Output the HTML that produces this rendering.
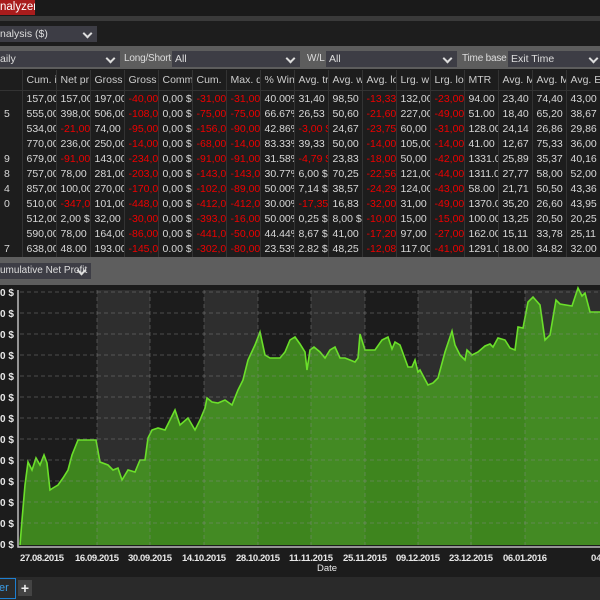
<!DOCTYPE html><html><head><style>
body{margin:0;width:600px;height:600px;overflow:hidden;background:#1d1d1d;font-family:"Liberation Sans",sans-serif;font-size:10.5px;color:#d8d8d8;position:relative}
.a{position:absolute;white-space:nowrap}
.dd{position:absolute;background:#3d3d45;color:#ddd;height:16px;line-height:16px;padding-left:3px;box-sizing:border-box;white-space:nowrap;overflow:hidden}
.dd:after{content:"";position:absolute;right:6px;top:4px;width:5px;height:5px;border-right:2px solid #ddd;border-bottom:2px solid #ddd;transform:rotate(45deg)}
table{position:absolute;left:0;top:70px;border-collapse:collapse;table-layout:fixed;width:600px}
td{height:15.1px;padding:0 0 0 4px;white-space:nowrap;overflow:hidden;border-right:1px solid #333;font-size:10.5px;color:#d8d8d8;text-overflow:clip}
tr.h td{height:20px;border-bottom:1px solid #333;color:#ccc}
.r{color:#e00}
</style></head><body>
<div class="a" style="left:0;top:0;width:600px;height:17px;background:#1a1a1a"></div>
<div class="a" style="left:0;top:0;width:35px;height:15px;background:#a81c1c;color:#fff;font-size:11.5px;line-height:15px;overflow:hidden">nalyzer</div>
<div class="a" style="left:0;top:16px;width:600px;height:5px;background:#3a3a3a"></div>
<div class="dd" style="left:-3px;top:26px;width:100px">nalysis ($)</div>
<div class="a" style="left:0;top:46px;width:600px;height:23px;background:#5d5d5d"></div>
<div class="dd" style="left:-3px;top:51px;width:123px">aily</div>
<div class="a" style="left:124px;top:51px;line-height:16px;color:#ddd;font-size:10px;letter-spacing:-0.2px">Long/Short</div>
<div class="dd" style="left:172px;top:51px;width:128px">All</div>
<div class="a" style="left:307px;top:51px;line-height:16px;color:#ddd;font-size:10px">W/L</div>
<div class="dd" style="left:326px;top:51px;width:131px">All</div>
<div class="a" style="left:462px;top:51px;line-height:16px;color:#ddd;font-size:10px;letter-spacing:-0.2px">Time base</div>
<div class="dd" style="left:508px;top:51px;width:95px">Exit Time</div>
<table>
<colgroup><col style="width:22px"><col span="17" style="width:34px"></colgroup>
<tr class="h"><td></td><td>Cum. i</td><td>Net pr</td><td>Gross</td><td>Gross</td><td>Comm</td><td>Cum.</td><td>Max. d</td><td>% Win</td><td>Avg. tr</td><td>Avg. w</td><td>Avg. lo</td><td>Lrg. w</td><td>Lrg. lo</td><td>MTR</td><td>Avg. M</td><td>Avg. M</td><td>Avg. E</td></tr>
<tr><td></td><td>157,00</td><td>157,00</td><td>197,00</td><td class="r">-40,00</td><td>0,00 $</td><td class="r">-31,00</td><td class="r">-31,00</td><td>40.00%</td><td>31,40</td><td>98,50</td><td class="r">-13,33</td><td>132,00</td><td class="r">-23,00</td><td>94.00</td><td>23,40</td><td>74,40</td><td>43,00</td></tr>
<tr><td>5</td><td>555,00</td><td>398,00</td><td>506,00</td><td class="r">-108,0</td><td>0,00 $</td><td class="r">-75,00</td><td class="r">-75,00</td><td>66.67%</td><td>26,53</td><td>50,60</td><td class="r">-21,60</td><td>227,00</td><td class="r">-49,00</td><td>51.00</td><td>18,40</td><td>65,20</td><td>38,67</td></tr>
<tr><td></td><td>534,00</td><td class="r">-21,00</td><td>74,00</td><td class="r">-95,00</td><td>0,00 $</td><td class="r">-156,0</td><td class="r">-90,00</td><td>42.86%</td><td class="r">-3,00 $</td><td>24,67</td><td class="r">-23,75</td><td>60,00</td><td class="r">-31,00</td><td>128.00</td><td>24,14</td><td>26,86</td><td>29,86</td></tr>
<tr><td></td><td>770,00</td><td>236,00</td><td>250,00</td><td class="r">-14,00</td><td>0,00 $</td><td class="r">-68,00</td><td class="r">-14,00</td><td>83.33%</td><td>39,33</td><td>50,00</td><td class="r">-14,00</td><td>105,00</td><td class="r">-14,00</td><td>41.00</td><td>12,67</td><td>75,33</td><td>36,00</td></tr>
<tr><td>9</td><td>679,00</td><td class="r">-91,00</td><td>143,00</td><td class="r">-234,0</td><td>0,00 $</td><td class="r">-91,00</td><td class="r">-91,00</td><td>31.58%</td><td class="r">-4,79 $</td><td>23,83</td><td class="r">-18,00</td><td>50,00</td><td class="r">-42,00</td><td>1331.0</td><td>25,89</td><td>35,37</td><td>40,16</td></tr>
<tr><td>8</td><td>757,00</td><td>78,00</td><td>281,00</td><td class="r">-203,0</td><td>0,00 $</td><td class="r">-143,0</td><td class="r">-143,0</td><td>30.77%</td><td>6,00 $</td><td>70,25</td><td class="r">-22,56</td><td>121,00</td><td class="r">-44,00</td><td>1311.0</td><td>27,77</td><td>58,00</td><td>52,00</td></tr>
<tr><td>4</td><td>857,00</td><td>100,00</td><td>270,00</td><td class="r">-170,0</td><td>0,00 $</td><td class="r">-102,0</td><td class="r">-89,00</td><td>50.00%</td><td>7,14 $</td><td>38,57</td><td class="r">-24,29</td><td>124,00</td><td class="r">-43,00</td><td>58.00</td><td>21,71</td><td>50,50</td><td>43,36</td></tr>
<tr><td>0</td><td>510,00</td><td class="r">-347,0</td><td>101,00</td><td class="r">-448,0</td><td>0,00 $</td><td class="r">-412,0</td><td class="r">-412,0</td><td>30.00%</td><td class="r">-17,35</td><td>16,83</td><td class="r">-32,00</td><td>31,00</td><td class="r">-49,00</td><td>1370.0</td><td>35,20</td><td>26,60</td><td>43,95</td></tr>
<tr><td></td><td>512,00</td><td>2,00 $</td><td>32,00</td><td class="r">-30,00</td><td>0,00 $</td><td class="r">-393,0</td><td class="r">-16,00</td><td>50.00%</td><td>0,25 $</td><td>8,00 $</td><td class="r">-10,00</td><td>15,00</td><td class="r">-15,00</td><td>100.00</td><td>13,25</td><td>20,50</td><td>20,25</td></tr>
<tr><td></td><td>590,00</td><td>78,00</td><td>164,00</td><td class="r">-86,00</td><td>0,00 $</td><td class="r">-441,0</td><td class="r">-50,00</td><td>44.44%</td><td>8,67 $</td><td>41,00</td><td class="r">-17,20</td><td>97,00</td><td class="r">-27,00</td><td>162.00</td><td>15,11</td><td>33,78</td><td>25,11</td></tr>
<tr><td>7</td><td>638,00</td><td>48.00</td><td>193.00</td><td class="r">-145,0</td><td>0.00 $</td><td class="r">-302,0</td><td class="r">-80,00</td><td>23.53%</td><td>2.82 $</td><td>48,25</td><td class="r">-12,08</td><td>117.00</td><td class="r">-41,00</td><td>1291.0</td><td>18.00</td><td>34.82</td><td>32.00</td></tr>
</table>
<div class="a" style="left:0;top:257px;width:600px;height:28px;background:#5e5e5e"></div>
<div class="dd" style="left:-3px;top:263px;width:94px;padding-right:16px;font-size:10px">umulative Net Profit</div>
<div class="a" style="left:0;top:285px;width:600px;height:292px;background:#1c1c1c"></div>
<svg class="a" style="left:0;top:285px" width="600" height="292">
<g transform="translate(0,-285)">
<g fill="#2e2e2e"><rect x="97" y="290" width="53" height="255"/><rect x="204" y="290" width="54" height="255"/><rect x="311" y="290" width="54" height="255"/><rect x="418" y="290" width="54" height="255"/><rect x="525" y="290" width="75" height="255"/></g>
<polygon fill="#4caf20" fill-opacity="0.72" points="20,545 22,520 25,485 28,462 32,470 36,458 40,465 44,455 47,463 50,490 53,488 58,485 63,478 68,470 72,455 78,440 90,440 96,440 100,462 108,465 113,470 118,468 122,480 128,470 135,472 140,460 145,460 148,438 152,430 158,428 165,430 170,420 175,410 180,425 188,418 195,430 200,420 205,408 207,398 212,402 218,403 225,400 232,405 238,390 243,380 248,360 255,345 260,332 265,355 270,358 280,358 285,352 290,340 295,337 300,344 305,352 307,370 310,350 314,347 320,352 325,358 330,350 335,347 340,358 345,358 350,360 355,362 358,358 360,334 365,350 375,350 382,340 388,337 392,349 395,342 400,345 408,367 412,367 415,360 418,372 420,370 428,385 433,383 438,378 445,352 452,331 455,345 460,355 465,360 467,350 472,355 478,352 485,346 490,344 493,347 498,338 505,340 510,348 515,350 518,327 523,328 528,302 533,297 540,305 545,340 550,335 556,300 560,304 572,306 578,288 582,296 585,293 590,312 600,312 600,545"/>
<polyline fill="none" stroke="#6be02a" stroke-width="1.6" points="20,545 22,520 25,485 28,462 32,470 36,458 40,465 44,455 47,463 50,490 53,488 58,485 63,478 68,470 72,455 78,440 90,440 96,440 100,462 108,465 113,470 118,468 122,480 128,470 135,472 140,460 145,460 148,438 152,430 158,428 165,430 170,420 175,410 180,425 188,418 195,430 200,420 205,408 207,398 212,402 218,403 225,400 232,405 238,390 243,380 248,360 255,345 260,332 265,355 270,358 280,358 285,352 290,340 295,337 300,344 305,352 307,370 310,350 314,347 320,352 325,358 330,350 335,347 340,358 345,358 350,360 355,362 358,358 360,334 365,350 375,350 382,340 388,337 392,349 395,342 400,345 408,367 412,367 415,360 418,372 420,370 428,385 433,383 438,378 445,352 452,331 455,345 460,355 465,360 467,350 472,355 478,352 485,346 490,344 493,347 498,338 505,340 510,348 515,350 518,327 523,328 528,302 533,297 540,305 545,340 550,335 556,300 560,304 572,306 578,288 582,296 585,293 590,312 600,312"/>
<g stroke="#888" stroke-opacity="0.45" stroke-dasharray="4,3" stroke-width="1">
<path d="M20 292H600M20 313H600M20 334H600M20 355H600M20 376H600M20 397H600M20 418H600M20 439H600M20 460H600M20 481H600M20 502H600M20 523H600"/>
<path d="M97 290V545M150 290V545M204 290V545M258 290V545M311 290V545M365 290V545M418 290V545M471 290V545M525 290V545"/>
</g>
<path d="M18 290V547H600" stroke="#bbb" stroke-width="1.5" fill="none"/>
<g fill="#e8e8e8" font-size="10" font-weight="bold" font-family="Liberation Sans">
<text x="0" y="296">0 $</text><text x="0" y="317">0 $</text><text x="0" y="338">0 $</text><text x="0" y="359">0 $</text><text x="0" y="380">0 $</text><text x="0" y="401">0 $</text><text x="0" y="422">0 $</text><text x="0" y="443">0 $</text><text x="0" y="464">0 $</text><text x="0" y="485">0 $</text><text x="0" y="506">0 $</text><text x="0" y="527">0 $</text><text x="0" y="548">0 $</text>
</g>
<g fill="#e8e8e8" font-size="9.5" font-weight="bold" font-family="Liberation Sans"><text x="20" y="561" textLength="44">27.08.2015</text><text x="75" y="561" textLength="44">16.09.2015</text><text x="128" y="561" textLength="44">30.09.2015</text><text x="182" y="561" textLength="44">14.10.2015</text><text x="236" y="561" textLength="44">28.10.2015</text><text x="289" y="561" textLength="44">11.11.2015</text><text x="343" y="561" textLength="44">25.11.2015</text><text x="396" y="561" textLength="44">09.12.2015</text><text x="449" y="561" textLength="44">23.12.2015</text><text x="503" y="561" textLength="44">06.01.2016</text><text x="591" y="561">04</text><text x="317" y="571" font-weight="normal">Date</text></g>
</g></svg>
<div class="a" style="left:0;top:577px;width:600px;height:23px;background:#2a2a2a"></div>
<div class="a" style="left:-2px;top:578px;width:18px;height:21px;border:1px solid #1e7fd0;box-sizing:border-box;color:#3b9de8;line-height:19px;font-size:11px;overflow:hidden">er</div>
<div class="a" style="left:18px;top:580px;width:14px;height:16px;background:#444;color:#eee;text-align:center;line-height:16px;font-size:14px;font-weight:bold">+</div>
</body></html>
